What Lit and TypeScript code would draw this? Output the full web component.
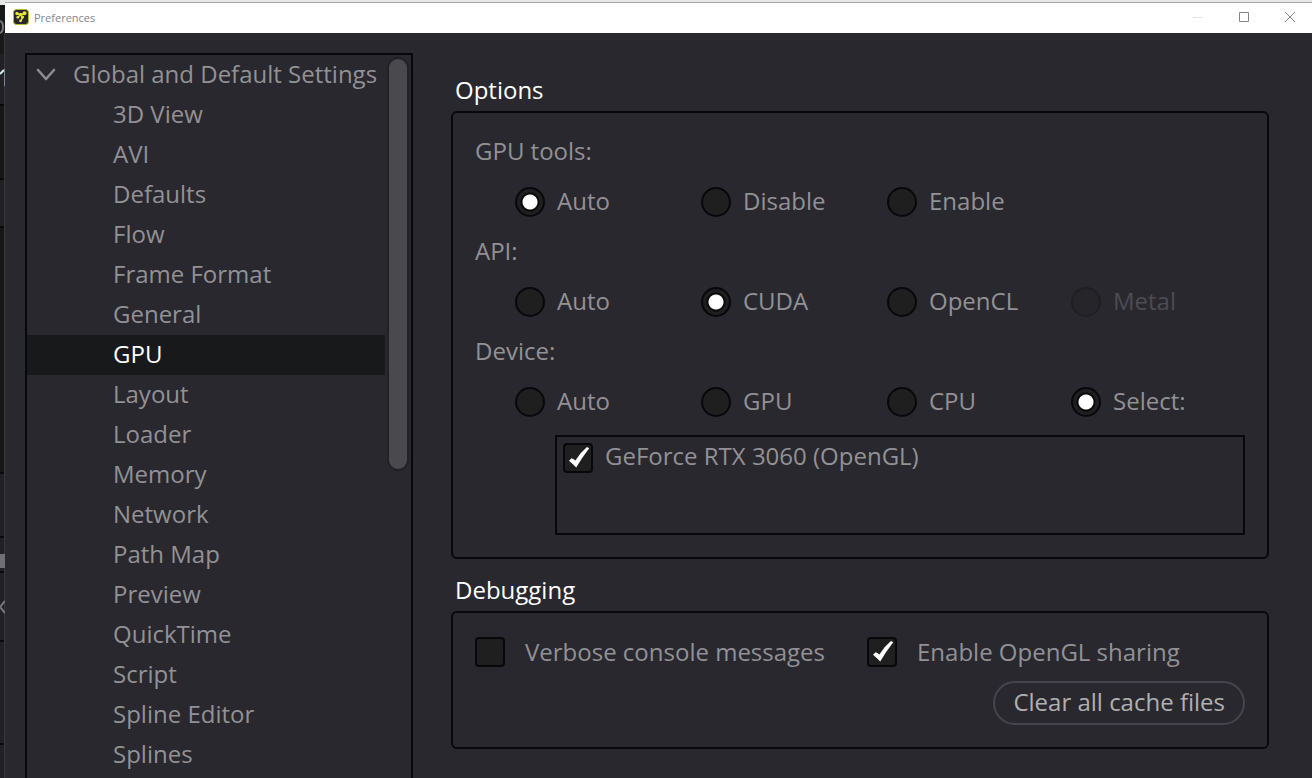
import { LitElement, html, css, svg } from "lit";
import { customElement, state, property } from "lit/decorators.js";
import { classMap } from "lit/directives/class-map.js";

const PAGES = [
  "3D View", "AVI", "Defaults", "Flow", "Frame Format", "General", "GPU", "Layout", "Loader", "Memory",
  "Network", "Path Map", "Preview", "QuickTime", "Script", "Spline Editor", "Splines",
];

interface Choice { label: string; disabled?: boolean }
interface Group { name: string; title: string; choices: Choice[]; value: string }

const GROUPS: Group[] = [
  { name: "tools", title: "GPU tools:", value: "Auto", choices: [{ label: "Auto" }, { label: "Disable" }, { label: "Enable" }] },
  { name: "api", title: "API:", value: "CUDA", choices: [{ label: "Auto" }, { label: "CUDA" }, { label: "OpenCL" }, { label: "Metal", disabled: true }] },
  { name: "device", title: "Device:", value: "Select:", choices: [{ label: "Auto" }, { label: "GPU" }, { label: "CPU" }, { label: "Select:" }] },
];

@customElement("check-option")
class CheckOption extends LitElement {
  @property() label = "";
  @property({ type: Boolean }) checked = false;

  static styles = css`
    :host { display: block; }
    .row {
      display: flex; align-items: flex-start; gap: var(--check-gap, 20px); height: 30px;
      line-height: var(--check-line, 30px); white-space: nowrap;
    }
    .box { display: grid; flex: none; width: 30px; height: 30px; }
    .box > * { grid-area: 1 / 1; }
    input {
      appearance: none; margin: 0; width: 30px; height: 30px; box-sizing: border-box;
      border: 2px solid #08080c; border-radius: 4px; background: #1f1f1f;
    }
    svg { width: 30px; height: 30px; fill: #fff; pointer-events: none; visibility: hidden; }
    input:checked + svg { visibility: visible; }
  `;

  render() {
    return html`<label class="row">
      <span class="box">
        <input type="checkbox" .checked=${this.checked} />
        <svg viewBox="0 0 30 30" aria-hidden="true"><path d="M6 17.8 8.6 15.2Q11 16 12.4 17.6Q17 9.6 24 4L26.2 5.2Q19 14.6 13.2 24.4Q10.4 21.6 6 17.8Z" /></svg>
      </span>
      <span>${this.label}</span>
    </label>`;
  }
}

@customElement("app-root")
class AppRoot extends LitElement {
  @state() private page = "GPU";

  static styles = css`
    :host {
      display: grid; grid-template-columns: 5px minmax(0, 1fr); height: 100vh; overflow: hidden;
      background: #29282e; color: #929195; font: 24px/38px "Open Sans", sans-serif;
    }
    .behind { display: block; width: 5px; height: 778px; }
    .window { display: flex; flex-direction: column; min-width: 0; min-height: 0; }
    .edge { flex: none; height: 2px; background: #e8e8e8; border-bottom: 1px solid #a8a8a8; }
    .titlebar {
      display: flex; align-items: center; flex: none; height: 30px; padding-left: 8px; gap: 5px;
      background: #fff; color: #85858a; font-size: 11px; line-height: 16px;
    }
    .titlebar > svg { margin-bottom: 2px; }
    .titlebar h1 { flex: 1; margin: 0; font: inherit; }
    .caption { width: 46px; height: 30px; border: 0; padding: 0 0 2px 2px; background: none; flex: none; }
    .controls { display: flex; }
    .controls svg { display: block; margin: auto; }
    .body { display: flex; flex: 1; min-height: 0; padding-left: 20px; gap: 38px; }
    .tree {
      display: flex; flex: none; width: 384px; margin-top: 20px; overflow: hidden;
      border: 2px solid #08080c; border-bottom: 0;
    }
    .list { width: 358px; flex: none; }
    .parent, .item {
      display: block; width: 100%; height: 40px; padding: 0 0 2px; border: 0; background: none;
      color: inherit; font: inherit; text-align: left; white-space: nowrap;
    }
    .parent { display: flex; align-items: center; gap: 17px; padding-left: 8px; }
    .parent svg { flex: none; }
    .item { padding-left: 86px; }
    .item.current { background: #18191a; color: #fff; }
    .bar { margin: 2px 0 0 2px; width: 18px; height: 410px; border: 2px solid #222226; border-radius: 12px; background: #4a494e; }
    main { flex: 1; min-width: 0; padding: 40px 43px 0 0; }
    h2 { margin: 0; padding: 0 0 0 4px; font: inherit; line-height: 34px; color: #fff; }
    .panel { border: 2px solid #08080c; border-radius: 6px; padding: 14px 22px 22px; margin-bottom: 14px; }
    h2 + .panel { margin-top: 4px; }
    fieldset { border: 0; margin: 0; padding: 0; min-width: 0; }
    legend { padding: 0; height: 50px; line-height: 48px; }
    .choices { display: grid; grid-template-columns: 186px 186px 184px auto; padding-left: 40px; height: 50px; align-items: center; }
    .choice { display: flex; align-items: flex-start; gap: 12px; height: 30px; line-height: 28px; }
    .choice input {
      appearance: none; flex: none; margin: 0; width: 30px; height: 30px; box-sizing: border-box;
      border: 2px solid #08080c; border-radius: 50%; background: #1f1f1f;
    }
    .choice input:checked { background: radial-gradient(circle, #fff 7px, #08080c 8px, #08080c 9px, #1f1f1f 10px); }
    .choice.off { color: #4d4c52; }
    .choice.off input { background: #26252a; border-color: #1f1f24; }
    .devices {
      --check-gap: 12px; --check-line: 26px; margin: 8px 0 0 80px; height: 90px; padding: 6px 6px 0;
      border: 2px solid #08080c;
    }
    .debug { display: flex; flex-direction: column; gap: 14px; padding-top: 24px; }
    .checks { display: grid; grid-template-columns: 392px auto; }
    .clear {
      align-self: flex-end; height: 44px; padding: 0 18px 2px; border: 2px solid #46444f; border-radius: 22px;
      background: none; color: #b0b0b2; font: inherit; white-space: nowrap;
    }
  `;

  private backdrop() {
    return svg`
      <path fill="#e6e6e6" d="M0 0h5v5H0z" />
      <path fill="#18181a" d="M0 5h5v49H0z" />
      <path fill="#202025" d="M0 54h5v51H0zM0 179h5v48H0zM0 473h5v305H0z" />
      <path fill="#161617" d="M0 105h5v74H0zM0 227h5v246H0z" />
      <path fill="#09090c" d="M0 104h5v2H0zM0 178h5v2H0zM0 226h5v2H0zM0 472h5v2H0zM0 536h5v2H0zM0 571h5v2H0zM0 640h5v2H0zM0 743h5v2H0z" />
      <path fill="#3a3a3c" d="M4 33h1v745H4z" />
      <path fill="#707074" d="M0 554h5v14H0z" />
      <path fill="none" stroke="#77777b" stroke-width="2" d="M0 21Q3 22 3 27T0 33M5 601 0 607 5 613" />
      <path fill="none" stroke="#d8e4ec" stroke-width="2" d="M0 74 4 70" />
      <path fill="none" stroke="#6f8798" d="M4.500 69V86" />`;
  }

  render() {
    return html`
      <svg class="behind" viewBox="0 0 5 778" aria-hidden="true">${this.backdrop()}</svg>
      <div class="window">
        <div class="edge"></div>
        <header class="titlebar">
          <svg width="16" height="16" viewBox="0 0 16 16" aria-hidden="true">
            <rect x=".5" y=".5" width="15" height="15" rx="3" fill="#26262c" stroke="#b9bd2b" />
            <path d="M4 5 8 6 12 4M8 6 5 8M10 7 8 12" stroke="#e6e835" stroke-width="1.5" fill="none" />
            <g fill="#e6e835"><circle cx="4" cy="4.500" r="1.700" /><circle cx="7.500" cy="5.500" r="1.700" /><circle cx="11.500" cy="4.300" r="2" /><circle cx="4.800" cy="8.300" r="1.400" /><circle cx="9.500" cy="8" r="1.600" /><circle cx="7.500" cy="11.800" r="1.400" /></g>
          </svg>
          <h1>Preferences</h1>
          <div class="controls">
            <button class="caption" aria-label="Minimize"><svg width="12" height="12"><path d="M1 6.500h10" stroke="#e4e4e4" /></svg></button>
            <button class="caption" aria-label="Maximize"><svg width="12" height="12"><path d="M1.500 1.500h9v9h-9z" fill="none" stroke="#858585" /></svg></button>
            <button class="caption" aria-label="Close"><svg width="12" height="12"><path d="m1 1 10 10M11 1 1 11" stroke="#858585" /></svg></button>
          </div>
        </header>
        <div class="body">
          <nav class="tree" aria-label="Preference pages">
            <div class="list">
              <button class="parent" aria-expanded="true">
                <svg width="21" height="16" viewBox="0 0 21 16" aria-hidden="true"><path d="M3 4 11 13 19 4" fill="none" stroke="#8c8b90" stroke-width="2.600" stroke-linecap="round" stroke-linejoin="round" /></svg>
                <span>Global and Default Settings</span>
              </button>
              ${PAGES.map((p) => html`<button class=${classMap({ item: true, current: p === this.page })} @click=${() => (this.page = p)}>${p}</button>`)}
            </div>
            <div class="bar"></div>
          </nav>
          <main>
            <h2>Options</h2>
            <section class="panel">
              ${GROUPS.map((g) => html`<fieldset>
                <legend>${g.title}</legend>
                <div class="choices">
                  ${g.choices.map((c) => html`<label class=${classMap({ choice: true, off: !!c.disabled })}>
                    <input type="radio" name=${g.name} ?checked=${c.label === g.value} ?disabled=${c.disabled} />${c.label}
                  </label>`)}
                </div>
              </fieldset>`)}
              <div class="devices"><check-option label="GeForce RTX 3060 (OpenGL)" checked></check-option></div>
            </section>
            <h2>Debugging</h2>
            <section class="panel debug">
              <div class="checks">
                <check-option label="Verbose console messages"></check-option>
                <check-option label="Enable OpenGL sharing" checked></check-option>
              </div>
              <button class="clear">Clear all cache files</button>
            </section>
          </main>
        </div>
      </div>`;
  }
}
